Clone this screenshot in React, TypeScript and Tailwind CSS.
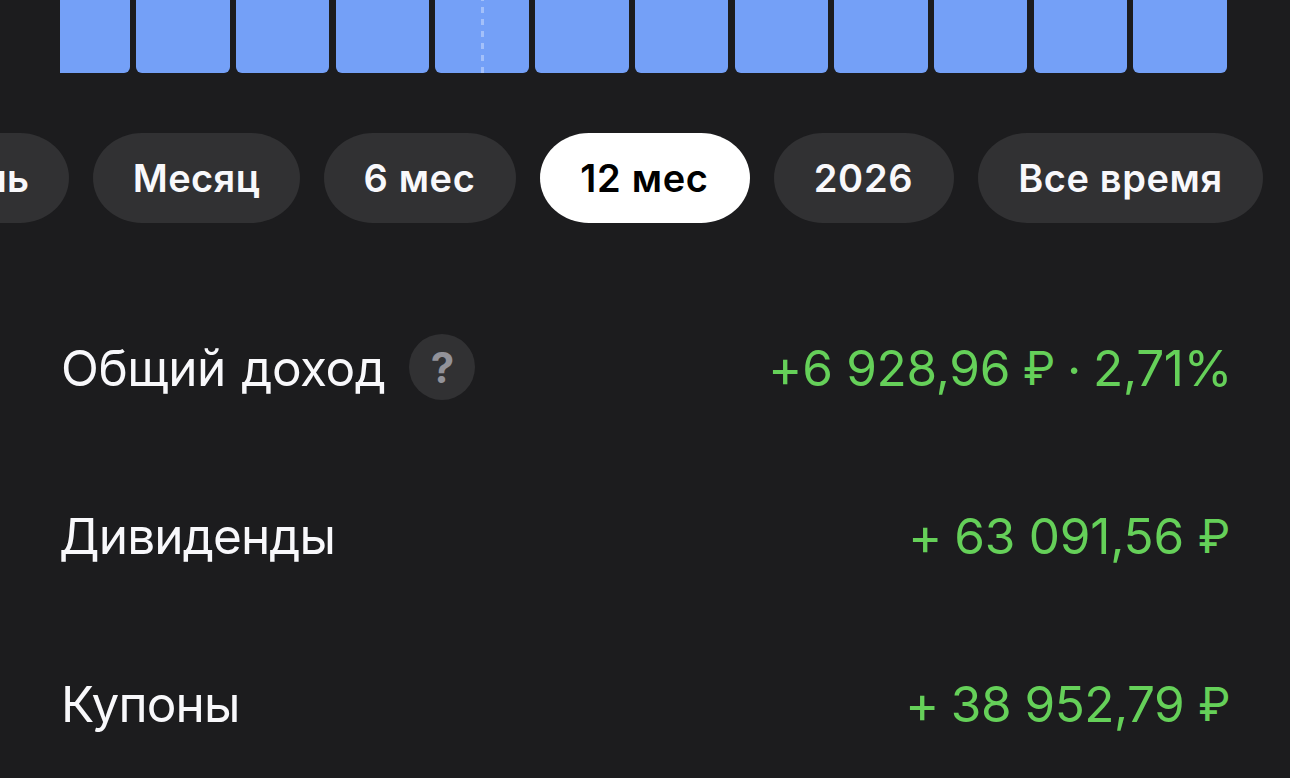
const bars = [70, 93.5, 93.5, 93.5, 93.5, 93.5, 93.5, 93.5, 93.5, 93.5, 93.5, 93.5];
const markedBar = 4;

const periods = [
  { label: "День", style: "w-[175px] -ml-[106px] pr-10 justify-end tracking-[0.1px]" },
  { label: "Месяц", style: "w-[207px] justify-center tracking-[0.4px]" },
  { label: "6 мес", style: "w-[192px] pr-px justify-center tracking-[0.6px]" },
  { label: "12 мес", style: "w-[210px] pr-px justify-center tracking-[0.7px]", active: true },
  { label: "2026", style: "w-[180px] pr-px justify-center tracking-[0.7px]" },
  { label: "Все время", style: "w-[285px] justify-center tracking-[0.6px]" },
];

const rows = [
  {
    label: "Общий доход",
    labelStyle: "pl-px tracking-[-0.45px] [word-spacing:2px]",
    valueStyle: "-mr-[3px] tracking-[-0.3px]",
    signStyle: "-ml-px",
    rubleStyle: "ml-[13px]",
    amount: "6 928,96",
    percent: "2,71%",
    help: true,
  },
  {
    label: "Дивиденды",
    labelStyle: "-ml-px tracking-[-0.85px]",
    valueStyle: "-mr-px tracking-[-0.2px]",
    signStyle: "mr-[12px]",
    rubleStyle: "ml-[14px]",
    amount: "63 091,56",
  },
  {
    label: "Купоны",
    labelStyle: "pl-px tracking-[-0.85px]",
    valueStyle: "-mr-px tracking-[-0.5px]",
    signStyle: "mr-[12px]",
    rubleStyle: "ml-[14px]",
    amount: "38 952,79",
  },
];

export default function App() {
  return (
    <div className="h-[778px] w-[1290px] overflow-hidden bg-[#1c1c1e] font-['Inter','Noto_Sans',sans-serif] text-[#f8f8fb]">
      {/* Chart bars */}
      <div className="flex h-[73px] gap-[6.23px] pl-[60px]">
        {bars.map((w, i) => (
          <div
            key={i}
            className={`flex h-full shrink-0 justify-center bg-[#74a0f7] ${i === 0 ? "rounded-br-[6px]" : "rounded-b-[6px]"}`}
            style={{ width: w }}
          >
            {i === markedBar && (
              <div className="h-full w-[3px] bg-[repeating-linear-gradient(to_top,#a3c0fa_0px,#a3c0fa_6px,transparent_6px,transparent_12px)]" />
            )}
          </div>
        ))}
      </div>

      {/* Period picker */}
      <div className="mt-[60px] flex gap-6">
        {periods.map((p) => (
          <button
            key={p.label}
            className={`flex h-[90px] shrink-0 items-center whitespace-nowrap rounded-[49px/45px] pt-px text-[38px] font-[560] ${p.style} ${p.active ? "bg-white text-black" : "bg-[#313133]"}`}
          >
            {p.label}
          </button>
        ))}
      </div>

      {/* Income rows */}
      <div className="mt-[60px] pl-[60px] pr-[61px] text-[49.5px]">
        {rows.map((r) => (
          <div key={r.label} className="flex h-[168px] items-center justify-between">
            <div className="flex items-center gap-6">
              <span className={`pt-[3px] ${r.labelStyle}`}>{r.label}</span>
              {r.help && (
                <span className="flex size-[66px] items-center justify-center rounded-full bg-[#313133] text-[42px] font-bold text-[#929299]">
                  ?
                </span>
              )}
            </div>
            <div className={`flex items-baseline pt-[3px] text-[#65d059] ${r.valueStyle}`}>
              <span className={`text-[52px] leading-[60px] ${r.signStyle}`}>
                <span className="relative top-px">+</span>
              </span>
              <span>{r.amount}</span>
              <span className={`relative -top-px text-[46px] ${r.rubleStyle}`}>₽</span>
              {r.percent && (
                <>
                  <span className="relative top-0.5 mx-3">·</span>
                  <span>{r.percent}</span>
                </>
              )}
            </div>
          </div>
        ))}
      </div>
    </div>
  );
}
